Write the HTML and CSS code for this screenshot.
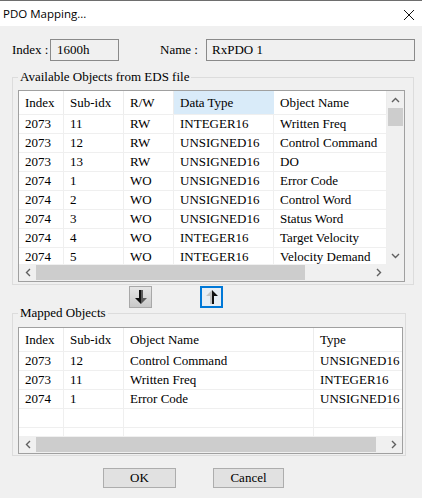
FILE: index.html
```html
<!DOCTYPE html>
<html>
<head>
<meta charset="utf-8">
<link rel="stylesheet" href="styles.css">
</head>
<body>
<div class="window">
  <div class="titlebar">
    <span class="title">PDO Mapping...</span>
    <svg class="close" width="12" height="12" viewBox="0 0 12 12"><path d="M1 1 L11 11 M11 1 L1 11" stroke="#111" stroke-width="1" fill="none"/></svg>
  </div>
  <div class="idrow">
    <span class="lbl lbl-index">Index :</span>
    <div class="field f-index">1600h</div>
    <span class="lbl lbl-name">Name :</span>
    <div class="field f-name">RxPDO 1</div>
  </div>

  <fieldset class="group g1">
    <legend>Available Objects from EDS file</legend>
    <div class="lv lv1">
      <div class="lv-main">
        <div class="lv-view">
          <div class="hdr">
            <div class="c">Index</div><div class="c">Sub-idx</div><div class="c">R/W</div><div class="c sel">Data Type</div><div class="c">Object Name</div>
          </div>
          <div class="row"><div class="c">2073</div><div class="c">11</div><div class="c">RW</div><div class="c">INTEGER16</div><div class="c">Written Freq</div></div>
          <div class="row"><div class="c">2073</div><div class="c">12</div><div class="c">RW</div><div class="c">UNSIGNED16</div><div class="c">Control Command</div></div>
          <div class="row"><div class="c">2073</div><div class="c">13</div><div class="c">RW</div><div class="c">UNSIGNED16</div><div class="c">DO</div></div>
          <div class="row"><div class="c">2074</div><div class="c">1</div><div class="c">WO</div><div class="c">UNSIGNED16</div><div class="c">Error Code</div></div>
          <div class="row"><div class="c">2074</div><div class="c">2</div><div class="c">WO</div><div class="c">UNSIGNED16</div><div class="c">Control Word</div></div>
          <div class="row"><div class="c">2074</div><div class="c">3</div><div class="c">WO</div><div class="c">UNSIGNED16</div><div class="c">Status Word</div></div>
          <div class="row"><div class="c">2074</div><div class="c">4</div><div class="c">WO</div><div class="c">INTEGER16</div><div class="c">Target Velocity</div></div>
          <div class="row"><div class="c">2074</div><div class="c">5</div><div class="c">WO</div><div class="c">INTEGER16</div><div class="c">Velocity Demand</div></div>
        </div>
        <div class="vscroll">
          <div class="sb-arrow"><svg width="9" height="6" viewBox="0 0 9 6"><path d="M1 5 L4.5 1.5 L8 5" stroke="#606060" stroke-width="1.4" fill="none"/></svg></div>
          <div class="vthumb"></div>
          <div class="vtrack"></div>
          <div class="sb-arrow"><svg width="9" height="6" viewBox="0 0 9 6"><path d="M1 1 L4.5 4.5 L8 1" stroke="#606060" stroke-width="1.4" fill="none"/></svg></div>
        </div>
      </div>
      <div class="lv-bottom">
        <div class="hscroll">
          <div class="sb-arrow"><svg width="6" height="9" viewBox="0 0 6 9"><path d="M5 1 L1.5 4.5 L5 8" stroke="#606060" stroke-width="1.4" fill="none"/></svg></div>
          <div class="hthumb hthumb1"></div>
          <div class="htrack"></div>
          <div class="sb-arrow"><svg width="6" height="9" viewBox="0 0 6 9"><path d="M1 1 L4.5 4.5 L1 8" stroke="#606060" stroke-width="1.4" fill="none"/></svg></div>
        </div>
        <div class="corner"></div>
      </div>
    </div>
  </fieldset>

  <div class="movebtns">
    <div class="mbtn mdown">
      <svg width="12" height="16" viewBox="0 0 12 16">
        <polygon points="4,1 6,1 6,15 0,9 4,9" fill="#111"/>
        <polygon points="6,1 8,1 8,9 12,9 6,15" fill="#5a5a5a"/>
      </svg>
    </div>
    <div class="mbtn mup">
      <svg width="12" height="16" viewBox="0 0 12 16">
        <polygon points="4,15 6,15 6,1 0,7 4,7" fill="#c4c4c4"/>
        <polygon points="6,15 8,15 8,7 12,7 6,1" fill="#111"/>
      </svg>
    </div>
  </div>

  <fieldset class="group g2">
    <legend>Mapped Objects</legend>
    <div class="lv lv2">
      <div class="lv-view">
        <div class="hdr">
          <div class="c">Index</div><div class="c">Sub-idx</div><div class="c">Object Name</div><div class="c">Type</div>
        </div>
        <div class="row"><div class="c">2073</div><div class="c">12</div><div class="c">Control Command</div><div class="c">UNSIGNED16</div></div>
        <div class="row"><div class="c">2073</div><div class="c">11</div><div class="c">Written Freq</div><div class="c">INTEGER16</div></div>
        <div class="row"><div class="c">2074</div><div class="c">1</div><div class="c">Error Code</div><div class="c">UNSIGNED16</div></div>
        <div class="row"><div class="c"></div><div class="c"></div><div class="c"></div><div class="c"></div></div>
        <div class="row"><div class="c"></div><div class="c"></div><div class="c"></div><div class="c"></div></div>
      </div>
      <div class="hscroll">
        <div class="sb-arrow"><svg width="6" height="9" viewBox="0 0 6 9"><path d="M5 1 L1.5 4.5 L5 8" stroke="#606060" stroke-width="1.4" fill="none"/></svg></div>
        <div class="hthumb hthumb2"></div>
        <div class="htrack"></div>
        <div class="sb-arrow"><svg width="6" height="9" viewBox="0 0 6 9"><path d="M1 1 L4.5 4.5 L1 8" stroke="#606060" stroke-width="1.4" fill="none"/></svg></div>
      </div>
    </div>
  </fieldset>

  <div class="dlgbtns">
    <div class="btn btn-ok">OK</div>
    <div class="btn btn-cancel">Cancel</div>
  </div>
</div>
</body>
</html>
```

FILE: styles.css
```css
* { box-sizing: border-box; }
html, body { margin: 0; padding: 0; }
body {
  width: 422px;
  height: 498px;
  background: #f0f0f0;
  font-family: "Liberation Serif", "Times New Roman", serif;
  font-size: 13px;
  color: #000;
  overflow: hidden;
}
.window { width: 422px; height: 498px; background: #f0f0f0; }

.titlebar {
  height: 26px;
  background: #fff;
  border-top: 1px solid #6e6e6e;
  display: flex;
  align-items: center;
  justify-content: space-between;
  padding: 0 7px 0 3px;
}
.title {
  font-family: "Open Sans", "Noto Sans", sans-serif;
  font-size: 11.5px;
  color: #000;
}
.close { display: block; margin-top: 3px; }

.idrow {
  display: flex;
  align-items: center;
  margin-top: 13px;
  height: 22px;
}
.lbl { white-space: nowrap; }
.lbl-index { margin-left: 12px; width: 38px; }
.lbl-name { margin-left: 41px; width: 46px; }
.field {
  height: 22px;
  border: 1px solid #8a8a8a;
  background: #f0f0f0;
  line-height: 20px;
  white-space: nowrap;
}
.f-index { width: 69px; padding-left: 6px; }
.f-name { width: 209px; padding-left: 5px; }

.group {
  margin: 0 0 0 12px;
  border: 1px solid #dcdcdc;
  min-width: 0;
}
.group legend {
  padding: 0 2px;
  line-height: 10px;
  height: 10px;
  white-space: nowrap;
}
.g1 { width: 402px; margin-top: 11px; padding: 8px 8px 2px 5px; }
.g2 { width: 394px; margin-top: 0; padding: 9px 2px 1px 5px; }

.lv {
  border: 1px solid #a0a0a0;
  background: #fff;
  overflow: hidden;
}
.lv1 { width: 387px; height: 192px; }
.lv2 { width: 385px; height: 127px; }
.lv-main { display: flex; }
.lv-view { overflow: hidden; background: #fff; }
.lv1 .lv-view { width: 368px; height: 173px; }
.lv2 .lv-view { width: 383px; height: 108px; }

.hdr, .row { display: grid; }
.lv1 .hdr, .lv1 .row { grid-template-columns: 45px 60px 50px 100px 113px; }
.lv2 .hdr, .lv2 .row { grid-template-columns: 45px 60px 190px 88px; }
.hdr { height: 24px; border-bottom: 1px solid #efefef; }
.hdr .c {
  line-height: 23px;
  padding-left: 6px;
  border-right: 1px solid #ececec;
  white-space: nowrap;
}
.hdr .c.sel { background: #d9ebf9; border-right-color: #d9ebf9; }
.row { height: 19px; border-bottom: 1px solid #efefef; }
.row .c {
  line-height: 18px;
  padding-left: 6px;
  border-right: 1px solid #efefef;
  white-space: nowrap;
  overflow: hidden;
}
.lv2 .c:last-child { border-right: none; overflow: visible; }

.vscroll {
  width: 17px;
  height: 173px;
  background: #f0f0f0;
  display: flex;
  flex-direction: column;
  align-items: center;
}
.vscroll .sb-arrow { width: 17px; height: 17px; }
.vthumb { width: 15px; height: 18px; background: #cdcdcd; }
.vtrack { flex: 1; }

.sb-arrow {
  display: flex;
  align-items: center;
  justify-content: center;
  flex: none;
}
.sb-arrow svg { display: block; }

.lv-bottom { display: flex; }
.hscroll {
  height: 17px;
  background: #f0f0f0;
  display: flex;
  align-items: center;
}
.lv1 .hscroll { width: 368px; }
.lv2 .hscroll { width: 383px; }
.hscroll .sb-arrow { width: 17px; height: 17px; }
.hthumb { height: 15px; background: #cdcdcd; flex: none; }
.hthumb1 { width: 269px; }
.hthumb2 { width: 340px; }
.htrack { flex: 1; }
.corner { width: 17px; height: 17px; background: #f0f0f0; }

.movebtns {
  display: flex;
  margin-top: 1px;
  height: 22px;
}
.mbtn {
  width: 23px;
  height: 22px;
  display: flex;
  align-items: center;
  justify-content: center;
}
.mdown {
  margin-left: 129px;
  border: 1px solid #a8a8a8;
  background: linear-gradient(#e6e6e6, #c9c9c9);
}
.mup {
  margin-left: 48px;
  border: 2px solid #0078d7;
  background: #e8eef4;
}

.dlgbtns {
  display: flex;
  margin-top: 12px;
}
.btn {
  height: 20px;
  border: 1px solid #adadad;
  background: #e1e1e1;
  text-align: center;
  line-height: 18px;
}
.btn-ok { width: 73px; margin-left: 103px; }
.btn-cancel { width: 71px; margin-left: 37px; }
```
